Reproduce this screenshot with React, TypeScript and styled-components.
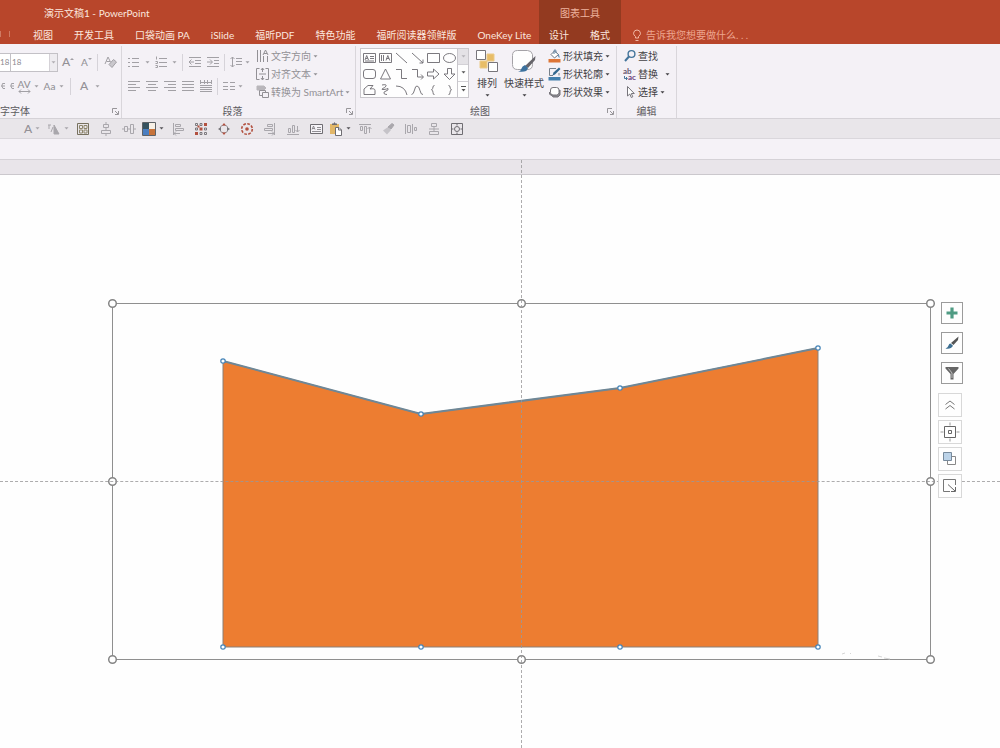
import React from "react";
import styled, { createGlobalStyle } from "styled-components";

const GlobalStyle = createGlobalStyle`
  *, *::before, *::after { box-sizing: border-box; }
  body {
    margin: 0;
    background: #fefefe;
    font-family: Lato, "Noto Sans CJK SC", sans-serif;
    font-size: 10px;
    line-height: 14px;
    color: #444;
  }
  button, select, input { font: inherit; color: inherit; }
`;

const Window = styled.div`
  min-height: 100vh;
  display: flex;
  flex-direction: column;
  overflow: hidden;
`;

/* ---------- title bar and tabs ---------- */

const Header = styled.header`
  display: flex;
  height: 44px;
  background: #b8462b;
  color: #fbe6df;
  white-space: nowrap;
`;

const HeaderColumn = styled.div<{ $context?: boolean }>`
  display: flex;
  flex-direction: column;
  background: ${(p) => (p.$context ? "#933a20" : "transparent")};
`;

const MainColumn = styled(HeaderColumn)`
  flex: 0 0 539px;
  min-width: 0;
`;

const Title = styled.h1<{ $center?: boolean }>`
  margin: 0;
  height: 26px;
  padding-left: ${(p) => (p.$center ? 0 : 44)}px;
  text-align: ${(p) => (p.$center ? "center" : "left")};
  color: ${(p) => (p.$center ? "#eeb39f" : "#fbe6df")};
  font-size: 10px;
  font-weight: 400;
  line-height: 26px;
`;

const TabRow = styled.nav`
  display: flex;
  height: 18px;
`;

const CutTab = styled.span`
  flex: 0 0 10px;
  height: 6px;
  margin: 5px 13px 0 0;
  border: solid #cf7a62;
  border-width: 0 1px;
`;

const Tab = styled.button`
  border: 0;
  background: none;
  padding: 0 10px;
  margin-right: 1px;
  line-height: 16px;
`;

const TellMe = styled.label`
  display: flex;
  align-items: center;
  align-self: flex-end;
  flex: 1;
  gap: 5px;
  height: 18px;
  padding-left: 12px;
`;

const TellMeInput = styled.input`
  flex: 1;
  min-width: 0;
  border: 0;
  padding: 0;
  background: none;
  outline: none;
  &::placeholder { color: #eda58f; opacity: 1; }
`;

/* ---------- ribbon ---------- */

const Ribbon = styled.div`
  display: flex;
  height: 75px;
  background: #f4f1f6;
  border-bottom: 1px solid #d5d2d7;
  white-space: nowrap;
`;

const Group = styled.section<{ $w: number }>`
  position: relative;
  flex: 0 0 ${(p) => p.$w}px;
  display: flex;
  flex-direction: column;
  border-right: 1px solid #d9d6db;
  margin-top: 2px;
`;

const GroupBody = styled.div<{ $pad?: number }>`
  display: flex;
  flex: 1;
  padding-left: ${(p) => p.$pad ?? 0}px;
`;

const GroupLabel = styled.h2<{ $start?: boolean; $launcher?: boolean }>`
  margin: 0;
  height: 14px;
  padding-right: ${(p) => (p.$launcher ? 12 : 0)}px;
  font-size: 10px;
  line-height: 14px;
  font-weight: 400;
  text-align: ${(p) => (p.$start ? "left" : "center")};
  color: #5c5a5e;
`;

const Launcher = styled.button`
  position: absolute;
  right: 2px;
  bottom: 3px;
  padding: 0;
  border: 0;
  background: none;
  line-height: 0;
`;

const Stack = styled.div<{ $lead?: number; $top?: number }>`
  display: flex;
  flex-direction: column;
  padding-top: ${(p) => p.$top ?? 1}px;
  padding-left: ${(p) => p.$lead ?? 0}px;
`;

const ToolRow = styled.div`
  display: flex;
  align-items: center;
  height: 24px;
`;

const Tool = styled.button<{ $w?: number }>`
  display: flex;
  align-items: center;
  justify-content: center;
  flex: 0 0 ${(p) => p.$w ?? 18}px;
  height: 18px;
  padding: 0;
  border: 0;
  background: none;
  color: #a2a0a5;
`;

const StackedTool = styled(Tool)`
  flex-direction: column;
`;

const Letter = styled.span<{ $size: number; $tight?: boolean }>`
  font-size: ${(p) => p.$size}px;
  line-height: ${(p) => (p.$tight ? 10 : 16)}px;
  font-weight: 500;
  color: #939196;
`;

const Divider = styled.span<{ $gap: number }>`
  width: 1px;
  height: 17px;
  margin: 0 ${(p) => p.$gap}px;
  background: #d6d3d9;
`;

const SizeBox = styled.span`
  display: flex;
  flex: 0 0 58px;
  height: 19px;
  border: 1px solid #c3c1c6;
  border-left: 0;
  background: #fff;
  color: #8b898e;
  font-size: 8px;
`;

const HiddenFont = styled.span`
  width: 11px;
  border-right: 1px solid #c3c1c6;
  line-height: 17px;
`;

const SizeSelect = styled.select`
  flex: 1;
  appearance: none;
  border: 0;
  padding: 0 0 0 1px;
  background: none;
  line-height: 17px;
`;

const SizeArrow = styled.span`
  display: flex;
  align-items: center;
  justify-content: center;
  width: 8px;
  background: #eeecf0;
  border-left: 1px solid #d5d2d7;
  color: #b0aeb3;
`;

const Command = styled.button<{ $muted?: boolean }>`
  display: flex;
  align-items: center;
  gap: 2px;
  height: 18px;
  padding: 0;
  border: 0;
  background: none;
  line-height: 18px;
  color: ${(p) => (p.$muted ? "#929095" : "#434145")};
`;

const CommandIcon = styled.span`
  width: 13px;
  line-height: 0;
`;

const BigButton = styled.button<{ $w: number }>`
  display: flex;
  flex-direction: column;
  align-items: center;
  flex: 0 0 ${(p) => p.$w}px;
  height: 54px;
  padding: 4px 0 0;
  border: 0;
  background: none;
  color: #434145;
  line-height: 22px;
`;

const Gallery = styled.div`
  display: flex;
  width: 109px;
  height: 50px;
  margin: 2px 2px 0 4px;
  border: 1px solid #c9c7cc;
  background: #fefefe;
`;

const GalleryGrid = styled.div`
  display: grid;
  flex: 1;
  grid-template-columns: repeat(6, 1fr);
`;

const Shape = styled.button`
  padding: 0;
  border: 0;
  background: none;
  line-height: 0;
  color: #6c6a6f;
`;

const GalleryScroll = styled.div`
  display: flex;
  flex-direction: column;
  width: 11px;
  border-left: 1px solid #c9c7cc;
`;

const ScrollButton = styled.button<{ $off?: boolean }>`
  flex: 1;
  display: flex;
  align-items: center;
  justify-content: center;
  padding: 0;
  border: 0;
  border-bottom: 1px solid #d3d1d6;
  background: ${(p) => (p.$off ? "#e4e2e6" : "#fefefe")};
  color: ${(p) => (p.$off ? "#b5b3b8" : "#555")};
  &:last-child { border-bottom: 0; }
`;

/* ---------- quick access bar ---------- */

const QuickBar = styled.div`
  display: flex;
  align-items: center;
  height: 20px;
  padding-left: 19px;
  background: #e9e6ea;
  border-bottom: 1px solid #dad7dc;
`;

const QuickButton = styled.button<{ $menu?: boolean; $dark?: boolean }>`
  display: flex;
  align-items: center;
  justify-content: center;
  gap: 3px;
  flex: 0 0 ${(p) => (p.$menu ? 26 : 23)}px;
  height: 18px;
  padding: 0;
  border: 0;
  background: none;
  color: ${(p) => (p.$dark ? "#555358" : "#a9a7ac")};
`;

const Strip = styled.div`
  height: 21px;
  background: #f5f2f7;
  border-bottom: 1px solid #d5d2d7;
`;

/* ---------- slide ---------- */

const Stage = styled.main`
  position: relative;
  flex: 1;
  min-height: 588px;
  background: #fefefe;
`;

const Ruler = styled.div`
  height: 15px;
  background: #e9e5ea;
  border-bottom: 1px solid #cbc8cd;
`;

const ChartObject = styled.svg`
  position: absolute;
  left: 104px;
  top: 135px;
`;

const VerticalGuide = styled.span`
  position: absolute;
  left: 521px;
  top: 0;
  bottom: 0;
  border-left: 1px dashed #99989a;
  opacity: 0.8;
`;

const HorizontalGuide = styled.span`
  position: absolute;
  top: 321px;
  left: 0;
  right: 0;
  border-top: 1px dashed #99989a;
  opacity: 0.8;
`;

const FloatBar = styled.div<{ $x: number; $y: number; $gap: number }>`
  position: absolute;
  left: ${(p) => p.$x}px;
  top: ${(p) => p.$y}px;
  display: flex;
  flex-direction: column;
  gap: ${(p) => p.$gap}px;
`;

const FloatButton = styled.button<{ $light?: boolean }>`
  display: flex;
  align-items: center;
  justify-content: center;
  width: ${(p) => (p.$light ? 24 : 22)}px;
  height: ${(p) => (p.$light ? 24 : 22)}px;
  padding: 0;
  border: 1px solid ${(p) => (p.$light ? "#d8d8d8" : "#9b9b9b")};
  background: #fefefe;
`;

/* ---------- drawings ---------- */

type DrawProps = { w?: number; h?: number; children: React.ReactNode };

const Draw = ({ w = 14, h = 14, children }: DrawProps) => (
  <svg width={w} height={h} viewBox={`0 0 ${w} ${h}`} fill="none" stroke="currentColor" aria-hidden="true">
    {children}
  </svg>
);

const Caret = () => (
  <Draw w={5} h={3}>
    <path d="M0.5 0.2h4L2.5 2.6z" fill="currentColor" stroke="none" />
  </Draw>
);

const LauncherIcon = () => (
  <Draw w={7} h={7}>
    <path d="M0.5 5V0.5H5M3 3l3 3M6.500 3v3.500H3" stroke="#8d8b90" strokeWidth="0.9" />
  </Draw>
);

const Lines = ({ d }: { d: string }) => (
  <Draw>
    <path d={d} />
  </Draw>
);

const BULLETS = "M1 3.500h2M5 3.500h7M1 7.500h2M5 7.500h7M1 11.500h2M5 11.500h7";
const NUMBERS = "M2.500 1.500v3M5 3.500h8M1.500 6.500h2v2h-2M5 7.500h8M1.500 10.500h2v2h-2M5 11.500h8";
const OUTDENT = "M1 2.500h12M7 5.500h6M7 8.500h6M1 11.500h12M6 7H1M3.500 4.500L1 7l2.500 2.500";
const INDENT = "M1 2.500h12M8 5.500h5M8 8.500h5M1 11.500h12M1 7h5M4 4.500L6.500 7 4 9.500";
const SPACING = "M3.500 2v10M1.500 4l2-2 2 2M1.500 10l2 2 2-2M7 3.500h6M7 6.500h6M7 9.500h6";
const LEFT = "M1 2.500h12M1 5.500h8M1 8.500h12M1 11.500h8";
const CENTER = "M1 2.500h12M3 5.500h8M1 8.500h12M3 11.500h8";
const RIGHT = "M1 2.500h12M5 5.500h8M1 8.500h12M5 11.500h8";
const JUSTIFY = "M1 2.500h12M1 5.500h12M1 8.500h12M1 11.500h12";
const DISTRIBUTE = "M1.500 1v4M5.500 1v4M8.500 1v4M12.500 1v4M1 3.500h12M1 6.500h12M1 8.500h12M1 10.500h12M1 12.500h12";
const COLUMNS = "M1 3.500h5M8 3.500h5M1 7.500h5M8 7.500h5M1 10.500h5M8 10.500h5";

const TextDirectionIcon = () => (
  <Draw w={13}>
    <path d="M1.500 1v12M4.500 1v12M7.500 7v6M11.500 7v6M7 6l2.500-5L12 6M8 4.500h3" />
  </Draw>
);
const AlignTextIcon = () => (
  <Draw w={13}>
    <path d="M3.500 1.500h-3v11h3M9.500 1.500h3v11h-3M3 7h7M6.500 1v4M5 3l1.500-2L8 3M6.500 13V9M5 11l1.500 2L8 11" />
  </Draw>
);
const SmartArtIcon = () => (
  <Draw w={13}>
    <path d="M1 1h7l2 2-2 2H1z" fill="currentColor" opacity="0.6" />
    <path d="M3.500 5.500h6v5h-6z" />
    <path d="M6.500 7.500h6v5h-6z" fill="#f4f1f6" />
  </Draw>
);

const FillIcon = () => (
  <Draw w={13}>
    <path d="M3 5.500L6.500 2l4 3.500-4 3.500z" fill="#fff" stroke="#6b7480" />
    <path d="M6 5V1.500q1-1.500 2 0V4" stroke="#5b7f9e" />
    <path d="M10 5q2 1.500 1.500 4-1.500-1-1.500-4z" fill="#3b78a8" stroke="none" />
    <path d="M0.500 10h12v3.500h-12z" fill="#dd7536" stroke="none" />
  </Draw>
);
const OutlineIcon = () => (
  <Draw w={13}>
    <path d="M8 1.500H1.500v7H5M11 6v2.500" stroke="#76808a" />
    <path d="M4.500 8.500l1-3L11 0.500l1.500 1.500L7 7.500z" fill="#33688f" stroke="none" />
    <path d="M0.500 10h12v3.500h-12z" fill="#437fad" stroke="none" />
  </Draw>
);
const EffectIcon = () => (
  <Draw w={13}>
    <path d="M3 10.500L1.500 9V7L5 12h5l2-2V5z" fill="#8b8990" stroke="#77757b" />
    <rect x="2.500" y="2.500" width="8.500" height="7.500" rx="2.500" fill="#fefefe" stroke="#77757b" />
  </Draw>
);
const FindIcon = () => (
  <Draw w={12}>
    <circle cx="7.500" cy="5" r="3.400" stroke="#44759b" strokeWidth="1.400" />
    <path d="M5 7.500L1 12" stroke="#44759b" strokeWidth="2" />
  </Draw>
);
const ReplaceIcon = () => (
  <Draw w={13}>
    <text x="0" y="7" fontSize="8" fontWeight="700" fill="#68566f" stroke="none">ab</text>
    <text x="5" y="13" fontSize="8" fontWeight="700" fill="#6a3d7e" stroke="none">ac</text>
    <path d="M1.500 9v2.500H4M3 10l1.500 1.500L3 13" stroke="#49759b" />
  </Draw>
);
const SelectIcon = () => (
  <Draw w={12}>
    <path d="M3.500 1.500v9.500l2.300-2 1.500 3.500 1.500-.7L7.300 8.500h3z" fill="#fff" stroke="#77757b" />
  </Draw>
);

const ArrangeIcon = () => (
  <Draw w={22} h={22}>
    <path d="M11 4h7v7h-7zM4 11h7v7H4z" fill="#e8bd68" stroke="#eccb88" />
    <path d="M0.500 0.500h9v9h-9zM12.500 12.500h9v9h-9z" fill="#fff" stroke="#77757b" />
  </Draw>
);
const StylesIcon = () => (
  <Draw w={25} h={22}>
    <path d="M5.500 0.500h10q4 0 5 4v10q0 5-5 5h-10q-5 0-5-5v-9q0-5 5-5z" fill="#fefefe" stroke="#a4a2a7" />
    <path d="M23.500 6l-.5 4-7 8-3-2z" fill="#66646a" stroke="none" />
    <path d="M13 15l3 3q-1 5-10 3.500 3-.5 3.500-3t3.500-3.500z" fill="#3b719e" stroke="none" />
  </Draw>
);
const EraserIcon = () => (
  <Draw w={13} h={13}>
    <path d="M1 8l3-7 2.500 5M2.500 5.500H6" />
    <path d="M5 8.500l4.500-5 3 2.500L8 11.500z" fill="#c9c7cc" />
  </Draw>
);
const BulbIcon = () => (
  <Draw w={8} h={13}>
    <path d="M2.500 9V7.500Q0.500 6 0.500 4.200 1 1 4 1t3.500 3.200Q7.500 6 5.500 7.500V9zM2.500 11.500h3" stroke="#f0b7a5" />
  </Draw>
);

const SHAPES: { name: string; d: string }[] = [
  { name: "文本框", d: "M1.500 3.500h12v9h-12zM3 10l1.700-4.500L6.500 10M3.700 8.500h2M8 6.500h4M8 8.500h4M3 11h9" },
  { name: "竖排文本框", d: "M1.500 3.500h12v9h-12zM3.500 5v6M5.500 5v6M8 10.500L9.800 5.500l2 5M8.500 8.500h2.500" },
  { name: "直线", d: "M2 3l11 10" },
  { name: "箭头", d: "M2 3l11 10M13 9.500V13H9.500" },
  { name: "矩形", d: "M1.500 3.500h12v9h-12z" },
  { name: "椭圆", d: "M13.500 8a6 4.500 0 1 1-12 0a6 4.500 0 1 1 12 0z" },
  { name: "圆角矩形", d: "M4 3.500h7q2.500 0 2.500 2.500v4q0 2.500-2.500 2.500H4Q1.500 12.500 1.500 10V6Q1.500 3.500 4 3.500z" },
  { name: "三角形", d: "M7.500 3l5 10h-10z" },
  { name: "肘形连接符", d: "M2 3.500h5.500v9H13" },
  { name: "肘形箭头", d: "M2 3.500h5.500v7.500H13M11 8.500l2.500 2.500-2.500 2.500" },
  { name: "右箭头", d: "M1.500 6h6V3l5.500 5-5.500 5v-3h-6z" },
  { name: "下箭头", d: "M5.500 2.500h4V8H13l-5.500 5.500L2 8h3.500z" },
  { name: "任意多边形", d: "M2 12.500V7l4-3.500h5L8 7q5-1 5 1.500v4z" },
  { name: "自由曲线", d: "M4 3q5-1 4 1T4.500 6.500Q3 8 6 7.500t4-1q1 1.500-2 2.500t-2 2.500q1 1 3 1" },
  { name: "弧形", d: "M2 4q9 0 11 9" },
  { name: "曲线", d: "M1.500 12.500Q3.500 12.500 4.500 8T7 4q2 0 3 4.500t3 4" },
  { name: "左大括号", d: "M8.500 3.500Q7 3.500 7 5t-1.500 3Q7 8 7 10.500t1.500 2" },
  { name: "右大括号", d: "M6.500 3.500Q8 3.500 8 5t1.500 3Q8 8 8 10.500t-1.500 2" },
];

const ink = "#6f6d72";
const red = "#b2503f";

const quickItems: { name: string; menu?: boolean; dark?: boolean; icon: React.ReactNode }[] = [
  { name: "字体颜色", menu: true, icon: <Letter $size={12}>A</Letter> },
  {
    name: "形状",
    menu: true,
    icon: (
      <Draw>
        <path d="M7 3L12 12H7z" fill="currentColor" />
        <path d="M1 3h3M2 3v4M4 10l2-5" />
      </Draw>
    ),
  },
  {
    name: "网格",
    icon: (
      <Draw>
        <path d="M1.500 1.500h11v11h-11z" stroke="#77715f" />
        <path d="M3.500 3.500h3v3h-3zM8 3.500h3v3H8zM3.500 8h3v3h-3zM8 8h3v3H8z" stroke="#8e866d" />
      </Draw>
    ),
  },
  { name: "水平居中", icon: <Lines d="M4.500 2.500h5v3h-5zM2.500 8.500h9v3h-9zM7 0v2M7 6v2M7 12v2" /> },
  { name: "垂直居中", icon: <Lines d="M2.500 4.500h3v5h-3zM8.500 2.500h3v9h-3zM0 7h2M6 7h2M12 7h2" /> },
  {
    name: "主题颜色",
    menu: true,
    dark: true,
    icon: (
      <Draw>
        <path d="M1 1h6v6H1z" fill="#35525f" stroke="none" />
        <path d="M7 1h6v6H7z" fill="#f7f0e6" stroke="none" />
        <path d="M1 7h6v6H1z" fill="#4a7ec0" stroke="none" />
        <path d="M7 7h6v6H7z" fill="#c7733a" stroke="none" />
        <path d="M0.500 0.500h13v13h-13z" stroke="#5e6266" />
      </Draw>
    ),
  },
  { name: "左对齐", icon: <Lines d="M2.500 1v12M4.500 2.500h5v2h-5zM4.500 6.500h8v2h-8zM3 11.500h6M5 9.500l-2 2 2 2" /> },
  {
    name: "阵列",
    icon: (
      <Draw>
        <path
          d="M1.500 1.500h2v2h-2zM6 1.500h2v2H6zM1.500 6h2v2h-2zM10.500 6h2v2h-2zM6 10.500h2v2H6zM10.500 10.500h2v2h-2z"
          stroke={ink}
          strokeWidth="0.900"
        />
        <path d="M10 1h3v3h-3zM5.500 5.500h3v3h-3zM1 10h3v3H1zM3.500 3.500h2v2h-2z" fill={red} stroke="none" />
      </Draw>
    ),
  },
  {
    name: "旋转",
    icon: (
      <Draw>
        <circle cx="7" cy="7" r="4" stroke="#9c9aa0" />
        <path d="M7 1l2 2.500H5zM7 13l2-2.500H5z" fill={red} stroke="none" />
        <path d="M1 7l3-2v4zM13 7l-3-2v4z" fill="#77757a" stroke="none" />
      </Draw>
    ),
  },
  {
    name: "环形",
    icon: (
      <Draw>
        <circle cx="7" cy="7" r="5.300" stroke={red} strokeWidth="1.600" strokeDasharray="2.700 1.400" />
        <circle cx="7" cy="7" r="1.800" fill={red} stroke="none" />
      </Draw>
    ),
  },
  { name: "右对齐", icon: <Lines d="M11.500 1v12M4.500 2.500h5v2h-5zM1.500 6.500h8v2h-8zM5 11.500h6M9 9.500l2 2-2 2" /> },
  { name: "底端对齐", icon: <Lines d="M1 12.500h12M2.500 6.500h2v4h-2zM6.500 3.500h2v7h-2zM11.500 4v6M9.500 8l2 2 2-2" /> },
  {
    name: "文本框",
    icon: (
      <Draw>
        <path d="M1.500 2.500h12v9h-12z" stroke={ink} fill="#f6f4f8" />
        <path d="M3 7.500L4.500 4 6 7.500M3.500 6.500h2M8 5.500h4M8 7.500h4M3 9.500h9" stroke="#77757a" strokeWidth="0.800" />
      </Draw>
    ),
  },
  {
    name: "粘贴",
    menu: true,
    dark: true,
    icon: (
      <Draw>
        <path d="M1 2h9v10H1z" fill="#e2b768" stroke="none" />
        <path d="M3 3V1.500h1.500L5.500 0l1 1.500H8V3z" fill={ink} stroke="none" />
        <path d="M6.500 5.500H10l2.500 2.500v5.500h-6z" fill="#fff" stroke={ink} />
        <path d="M9.500 5.500V8h3" stroke={ink} />
      </Draw>
    ),
  },
  { name: "顶端对齐", icon: <Lines d="M1 2.500h12M2.500 4.500h2v4h-2zM6.500 4.500h2v7h-2zM11.500 11V5M9.500 7l2-2 2 2" /> },
  {
    name: "格式刷",
    icon: (
      <Draw>
        <path d="M2 8.500l5-3.500 3 3-4 4.500z" fill="#c5c3c8" stroke="none" />
        <path d="M7 5l4-3.500 2 1.500-3 4z" fill="currentColor" />
      </Draw>
    ),
  },
  { name: "横向分布", icon: <Lines d="M1.500 2v10M3.500 3.500h3v7h-3zM8.500 2v10M10.500 5.500h2v3h-2z" /> },
  { name: "纵向分布", icon: <Lines d="M2 7h10M4.500 1.500h5v3h-5zM2.500 9.500h9v3h-9zM7 4.500v5" /> },
  {
    name: "选择窗格",
    icon: (
      <Draw>
        <path d="M1.500 1.500h11v11h-11z" stroke={ink} />
        <circle cx="7" cy="7" r="2.500" stroke={ink} />
        <path d="M7 1v2.500M7 10.500V13M1 7h2.500M10.500 7H13" stroke={ink} />
      </Draw>
    ),
  },
];

const mainTabs = ["视图", "开发工具", "口袋动画 PA", "iSlide", "福昕PDF", "特色功能", "福昕阅读器领鲜版", "OneKey Lite"];

const frameHandles = [
  [8, 8], [417, 8], [826, 8],
  [8, 186], [826, 186],
  [8, 364], [417, 364], [826, 364],
];

const dataHandles = [
  [119, 66], [317, 119], [516, 93], [714, 53],
  [119, 352], [317, 352], [516, 352], [714, 352],
];

export default function App() {
  return (
    <Window>
      <GlobalStyle />
      <Header>
        <MainColumn>
          <Title>演示文稿1 - PowerPoint</Title>
          <TabRow>
            <CutTab />
            {mainTabs.map((t) => (
              <Tab key={t}>{t}</Tab>
            ))}
          </TabRow>
        </MainColumn>
        <HeaderColumn $context>
          <Title as="div" $center>图表工具</Title>
          <TabRow>
            <Tab>设计</Tab>
            <Tab>格式</Tab>
          </TabRow>
        </HeaderColumn>
        <TellMe>
          <BulbIcon />
          <TellMeInput aria-label="告诉我您想要做什么" placeholder="告诉我您想要做什么. . ." />
        </TellMe>
      </Header>

      <Ribbon>
        <Group $w={122}>
          <GroupBody>
            <Stack $top={4}>
              <ToolRow>
                <SizeBox>
                  <HiddenFont>18</HiddenFont>
                  <SizeSelect aria-label="字号" defaultValue="18">
                    <option>18</option>
                    <option>24</option>
                  </SizeSelect>
                  <SizeArrow><Caret /></SizeArrow>
                </SizeBox>
                <Tool $w={20} aria-label="增大字号">
                  <Letter $size={12}>A</Letter>
                  <Draw w={4} h={12}><path d="M0 4l2-2 2 2z" fill="currentColor" stroke="none" /></Draw>
                </Tool>
                <Tool $w={17} aria-label="减小字号">
                  <Letter $size={10}>A</Letter>
                  <Draw w={4} h={12}><path d="M0 2h4L2 4z" fill="currentColor" stroke="none" /></Draw>
                </Tool>
                <Divider $gap={2} />
                <Tool $w={20} aria-label="清除格式"><EraserIcon /></Tool>
              </ToolRow>
              <ToolRow>
                <Tool $w={16} aria-label="删除线">
                  <Draw w={14} h={8}><path d="M4 1.500H1.500Q0 4 2 6.500H4M0 4h4M13 1.500h-2.500Q9 4 11 6.500h2M9.500 4H13" /></Draw>
                </Tool>
                <StackedTool $w={16} aria-label="字符间距">
                  <Letter $size={10} $tight>AV</Letter>
                  <Draw w={13} h={5}><path d="M1 2.500h11M3 0.500l-2 2 2 2M10 0.500l2 2-2 2" /></Draw>
                </StackedTool>
                <Tool $w={8} aria-label="字符间距选项"><Caret /></Tool>
                <Tool $w={19} aria-label="更改大小写"><Letter $size={10}>Aa</Letter></Tool>
                <Tool $w={5} aria-label="大小写选项"><Caret /></Tool>
                <Divider $gap={6} />
                <Tool $w={14} aria-label="字体颜色"><Letter $size={12}>A</Letter></Tool>
                <Tool $w={12} aria-label="字体颜色选项"><Caret /></Tool>
              </ToolRow>
            </Stack>
          </GroupBody>
          <GroupLabel $start>字字体</GroupLabel>
          <Launcher aria-label="字体设置"><LauncherIcon /></Launcher>
        </Group>

        <Group $w={234}>
          <GroupBody $pad={3}>
            <Stack $top={4}>
              <ToolRow>
                <Tool aria-label="项目符号"><Lines d={BULLETS} /></Tool>
                <Tool $w={9} aria-label="项目符号选项"><Caret /></Tool>
                <Tool aria-label="编号"><Lines d={NUMBERS} /></Tool>
                <Tool $w={9} aria-label="编号选项"><Caret /></Tool>
                <Divider $gap={3} />
                <Tool aria-label="减少缩进"><Lines d={OUTDENT} /></Tool>
                <Tool aria-label="增加缩进"><Lines d={INDENT} /></Tool>
                <Divider $gap={2} />
                <Tool aria-label="行距"><Lines d={SPACING} /></Tool>
                <Tool $w={5} aria-label="行距选项"><Caret /></Tool>
              </ToolRow>
              <ToolRow>
                <Tool aria-label="左对齐"><Lines d={LEFT} /></Tool>
                <Tool aria-label="居中"><Lines d={CENTER} /></Tool>
                <Tool aria-label="右对齐"><Lines d={RIGHT} /></Tool>
                <Tool aria-label="两端对齐"><Lines d={JUSTIFY} /></Tool>
                <Tool aria-label="分散对齐"><Lines d={DISTRIBUTE} /></Tool>
                <Divider $gap={2} />
                <Tool aria-label="分栏"><Lines d={COLUMNS} /></Tool>
                <Tool $w={5} aria-label="分栏选项"><Caret /></Tool>
              </ToolRow>
            </Stack>
            <Stack $lead={6}>
              <Command $muted><CommandIcon><TextDirectionIcon /></CommandIcon>文字方向<Caret /></Command>
              <Command $muted><CommandIcon><AlignTextIcon /></CommandIcon>对齐文本<Caret /></Command>
              <Command $muted><CommandIcon><SmartArtIcon /></CommandIcon>转换为 SmartArt<Caret /></Command>
            </Stack>
          </GroupBody>
          <GroupLabel $launcher>段落</GroupLabel>
          <Launcher aria-label="段落设置"><LauncherIcon /></Launcher>
        </Group>

        <Group $w={261}>
          <GroupBody>
            <Gallery>
              <GalleryGrid>
                {SHAPES.map((s) => (
                  <Shape key={s.name} aria-label={s.name}>
                    <Draw w={15} h={15}><path d={s.d} strokeWidth="0.900" /></Draw>
                  </Shape>
                ))}
              </GalleryGrid>
              <GalleryScroll>
                <ScrollButton $off aria-label="上一行"><Caret /></ScrollButton>
                <ScrollButton aria-label="下一行"><Caret /></ScrollButton>
                <ScrollButton aria-label="更多形状">
                  <Draw w={5} h={6}><path d="M0 0.500h5" /><path d="M0.500 3h4l-2 2.500z" fill="currentColor" stroke="none" /></Draw>
                </ScrollButton>
              </GalleryScroll>
            </Gallery>
            <BigButton $w={32}><ArrangeIcon />排列<Caret /></BigButton>
            <BigButton $w={42}><StylesIcon />快速样式<Caret /></BigButton>
            <Stack $lead={3}>
              <Command><CommandIcon><FillIcon /></CommandIcon>形状填充<Caret /></Command>
              <Command><CommandIcon><OutlineIcon /></CommandIcon>形状轮廓<Caret /></Command>
              <Command><CommandIcon><EffectIcon /></CommandIcon>形状效果<Caret /></Command>
            </Stack>
          </GroupBody>
          <GroupLabel $launcher>绘图</GroupLabel>
          <Launcher aria-label="绘图设置"><LauncherIcon /></Launcher>
        </Group>

        <Group $w={60}>
          <GroupBody $pad={6}>
            <Stack>
              <Command><CommandIcon><FindIcon /></CommandIcon>查找</Command>
              <Command><CommandIcon><ReplaceIcon /></CommandIcon>替换&nbsp;&nbsp;<Caret /></Command>
              <Command><CommandIcon><SelectIcon /></CommandIcon>选择<Caret /></Command>
            </Stack>
          </GroupBody>
          <GroupLabel>编辑</GroupLabel>
        </Group>
      </Ribbon>

      <QuickBar>
        {quickItems.map((q) => (
          <QuickButton key={q.name} $menu={q.menu} $dark={q.dark} aria-label={q.name}>
            {q.icon}
            {q.menu && <Caret />}
          </QuickButton>
        ))}
      </QuickBar>
      <Strip />

      <Stage>
        <Ruler />
        <ChartObject width="834" height="373" viewBox="0 0 834 373" role="img" aria-label="面积图">
          <path d="M119 66L317 119 516 93 714 53V352H119z" fill="#ed7d31" stroke="#8a8078" />
          <path d="M119 66L317 119 516 93 714 53" fill="none" stroke="#6f8796" strokeWidth="2" />
          <path d="M8.500 8.500h818v356h-818z" fill="none" stroke="#8f8f8f" />
          <path d="M738 359l3-1M746 358l1 1M774 361l4 1M780 363l6 1" stroke="#d5d5d5" />
          {dataHandles.map(([x, y]) => (
            <circle key={`${x}-${y}`} cx={x} cy={y} r="2.200" fill="#fff" stroke="#4584b8" strokeWidth="1.200" />
          ))}
          {frameHandles.map(([x, y]) => (
            <circle key={`${x}-${y}`} cx={x + 0.5} cy={y + 0.5} r="3.800" fill="#fff" stroke="#858585" strokeWidth="1.500" />
          ))}
        </ChartObject>
        <VerticalGuide />
        <HorizontalGuide />

        <FloatBar $x={941} $y={142} $gap={8}>
          <FloatButton aria-label="图表元素">
            <Draw><path d="M7 1.500v11M1.500 7h11" stroke="#4f9b83" strokeWidth="3.200" /></Draw>
          </FloatButton>
          <FloatButton aria-label="图表样式">
            <Draw>
              <path d="M13.500 0.500L13 4 8.500 9 6 7z" fill="#555" stroke="none" />
              <path d="M5.500 7.500L8 9.700Q6 13.500 0.500 12.500 3 11.500 3.500 9.500t2-2z" fill="#3d6f92" stroke="none" />
            </Draw>
          </FloatButton>
          <FloatButton aria-label="图表筛选器">
            <Draw>
              <path d="M0.500 1h13v1.500L8.500 8v5.500h-3V8L0.500 2.500z" fill="#666" stroke="none" />
              <path d="M3.500 2.500l3.500 4.500v5" stroke="#c8c8c8" strokeWidth="0.900" />
            </Draw>
          </FloatButton>
        </FloatBar>
        <FloatBar $x={938} $y={233} $gap={3}>
          <FloatButton $light aria-label="收起">
            <Draw><path d="M2.500 6.500L7 3l4.500 3.500M2.500 11L7 7.500l4.500 3.500" stroke="#777" /></Draw>
          </FloatButton>
          <FloatButton $light aria-label="居中定位">
            <Draw w={20} h={20}>
              <path d="M4.500 4.500h11v11h-11zM8.500 8.500h3v3h-3z" stroke="#666" />
              <path d="M10 0.500v3M10 16.500v3M0.500 10h3M16.500 10h3" stroke="#999" />
            </Draw>
          </FloatButton>
          <FloatButton $light aria-label="图层">
            <Draw w={16} h={16}>
              <path d="M5.500 5.500h8v8h-8z" fill="#fff" stroke="#888" />
              <path d="M1.500 1.500h8v8h-8z" fill="#bcd3e8" stroke="#778a9c" />
            </Draw>
          </FloatButton>
          <FloatButton $light aria-label="调整大小">
            <Draw w={16} h={16}>
              <path d="M13.500 7V1.500h-12v12H8" stroke="#777" />
              <path d="M6 6.500l7 6.500M13.500 9v4.500H9" stroke="#666" />
            </Draw>
          </FloatButton>
        </FloatBar>
      </Stage>
    </Window>
  );
}
